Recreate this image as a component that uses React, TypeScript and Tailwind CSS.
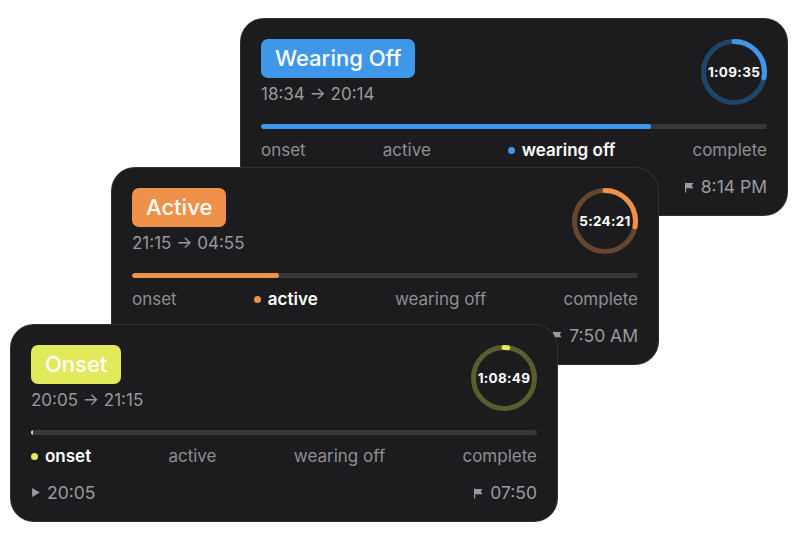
import type { ReactNode } from "react";

type Phase = "onset" | "active" | "wearing off" | "complete";

type Dose = {
  badge: string;
  phase: Phase;
  range: string;
  bar: number;
  ring: number;
  remaining: string;
  start: string;
  end: string;
  badgeClass: string;
  barClass: string;
  dotClass: string;
  ringColor: string;
  trackColor: string;
  cardClass: string;
};

const phases: Phase[] = ["onset", "active", "wearing off", "complete"];

const doses: Dose[] = [
  {
    badge: "Wearing Off",
    phase: "wearing off",
    range: "18:34 → 20:14",
    bar: 77,
    ring: 28,
    remaining: "1:09:35",
    start: "6:34 PM",
    end: "8:14 PM",
    badgeClass: "bg-[#3f97ea]",
    barClass: "bg-[#3f97ea]",
    dotClass: "bg-[#3f97ea]",
    ringColor: "#3f97ea",
    trackColor: "#1e4668",
    cardClass: "ml-[240px] mt-[18px]",
  },
  {
    badge: "Active",
    phase: "active",
    range: "21:15 → 04:55",
    bar: 29,
    ring: 28,
    remaining: "5:24:21",
    start: "9:15 PM",
    end: "7:50 AM",
    badgeClass: "bg-[#f0914a]",
    barClass: "bg-[#f0914a]",
    dotClass: "bg-[#f0914a]",
    ringColor: "#f0914a",
    trackColor: "#654630",
    cardClass: "ml-[111px] -mt-[49px]",
  },
  {
    badge: "Onset",
    phase: "onset",
    range: "20:05 → 21:15",
    bar: 0.4,
    ring: 2,
    remaining: "1:08:49",
    start: "20:05",
    end: "07:50",
    badgeClass: "bg-[#e2ea5c]",
    barClass: "bg-[#e2ea5c]",
    dotClass: "bg-[#e2ea5c]",
    ringColor: "#e2ea5c",
    trackColor: "#5b5d2c",
    cardClass: "ml-[10px] -mt-[41px]",
  },
];

function Ring({ pct, color, track, children }: { pct: number; color: string; track: string; children: ReactNode }) {
  const r = 30.5;
  const c = 2 * Math.PI * r;
  return (
    <div className="relative w-[66px] h-[66px] shrink-0">
      <svg width="66" height="66" viewBox="0 0 66 66" className="-rotate-90">
        <circle cx="33" cy="33" r={r} fill="none" stroke={track} strokeWidth="5" />
        <circle
          cx="33"
          cy="33"
          r={r}
          fill="none"
          stroke={color}
          strokeWidth="5"
          strokeLinecap="round"
          strokeDasharray={`${(pct / 100) * c} ${c}`}
        />
      </svg>
      <div className="absolute inset-0 flex items-center justify-center text-[13.5px] font-bold text-white tracking-[0.3px]">
        {children}
      </div>
    </div>
  );
}

function Flag() {
  return (
    <svg width="12" height="12" viewBox="0 0 12 12" className="mr-[6px]">
      <path d="M2 1.5h1.2v10H2z M3.2 2h7.3l-1.8 2.6 1.8 2.6H3.2z" fill="#9a9a9f" />
    </svg>
  );
}

function Play() {
  return (
    <svg width="10" height="11" viewBox="0 0 9 10" className="mr-[6px]">
      <path d="M1 1l7 4-7 4z" fill="#9a9a9f" />
    </svg>
  );
}

function DoseCard({ d }: { d: Dose }) {
  return (
    <div
      className={`${d.cardClass} relative w-[548px] h-[198px] rounded-[24px] bg-[#1c1c1e] border border-white/[0.09] px-[20px] pt-[20px] flex flex-col`}
    >
      <div className="flex justify-between items-start">
        <div className="flex flex-col">
          <div className={`${d.badgeClass} self-start rounded-[7px] h-[39px] px-[14px] flex items-center text-white text-[22px] font-medium`}>
            {d.badge}
          </div>
          <div className="mt-[8px] text-[17px] text-[#98989d] leading-none">{d.range}</div>
        </div>
        <Ring pct={d.ring} color={d.ringColor} track={d.trackColor}>
          {d.remaining}
        </Ring>
      </div>

      <div className="mt-[19px] h-[5px] rounded-full bg-[#38383b] overflow-hidden">
        <div className={`${d.barClass} h-full rounded-full`} style={{ width: `${d.bar}%` }} />
      </div>

      <div className="mt-[13px] flex justify-between items-center text-[17px] leading-none">
        {phases.map((p) =>
          p === d.phase ? (
            <div key={p} className="flex items-center text-white font-semibold">
              <span className={`${d.dotClass} w-[7px] h-[7px] rounded-full mr-[7px]`} />
              {p}
            </div>
          ) : (
            <div key={p} className="text-[#8e8e93]">
              {p}
            </div>
          )
        )}
      </div>

      <div className="mt-[19px] flex justify-between items-center text-[17.5px] leading-none text-[#9a9a9f]">
        <div className="flex items-center">
          <Play />
          {d.start}
        </div>
        <div className="flex items-center">
          <Flag />
          {d.end}
        </div>
      </div>
    </div>
  );
}

export default function App() {
  return (
    <div className="w-[800px] h-[539px] bg-white overflow-hidden font-['Inter','Noto_Sans',sans-serif]">
      {doses.map((d) => (
        <DoseCard key={d.badge} d={d} />
      ))}
    </div>
  );
}
